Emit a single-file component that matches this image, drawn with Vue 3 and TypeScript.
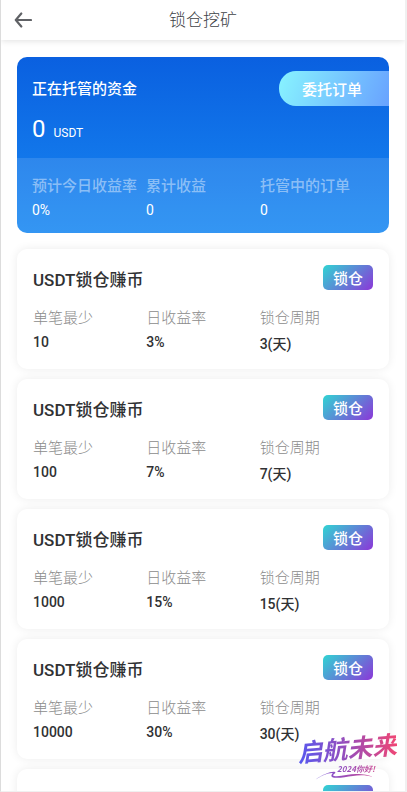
<script setup lang="ts">
interface Stat {
  label: string
  value: string
}

interface Plan {
  id: number
  title: string
  minimum: string
  rate: string
  period: string
}

const stats: Stat[] = [
  { label: '预计今日收益率', value: '0%' },
  { label: '累计收益', value: '0' },
  { label: '托管中的订单', value: '0' },
]

const plans: Plan[] = [
  { id: 1, title: 'USDT锁仓赚币', minimum: '10', rate: '3%', period: '3(天)' },
  { id: 2, title: 'USDT锁仓赚币', minimum: '100', rate: '7%', period: '7(天)' },
  { id: 3, title: 'USDT锁仓赚币', minimum: '1000', rate: '15%', period: '15(天)' },
  { id: 4, title: 'USDT锁仓赚币', minimum: '10000', rate: '30%', period: '30(天)' },
  { id: 5, title: 'USDT锁仓赚币', minimum: '50000', rate: '45%', period: '45(天)' },
]
</script>

<template>
  <div class="page">
    <header class="bar">
      <button class="back" type="button" aria-label="返回">
        <svg width="18" height="16" viewBox="0 0 18 16" aria-hidden="true">
          <path d="M17 8H2M7.3 1.5L1.8 8l5.5 6.5" fill="none" stroke="#606266" stroke-width="2.2" stroke-linecap="round" stroke-linejoin="round" />
        </svg>
      </button>
      <h1>锁仓挖矿</h1>
    </header>

    <main class="content">
      <section class="balance">
        <div class="balance-top">
          <div>
            <h2>正在托管的资金</h2>
            <p class="amount">0<span>USDT</span></p>
          </div>
          <button class="orders" type="button">委托订单</button>
        </div>
        <dl class="grid stats">
          <div v-for="stat in stats" :key="stat.label">
            <dt>{{ stat.label }}</dt>
            <dd>{{ stat.value }}</dd>
          </div>
        </dl>
      </section>

      <article v-for="plan in plans" :key="plan.id" class="plan">
        <div class="plan-head">
          <h3>{{ plan.title }}</h3>
          <button class="lock" type="button">锁仓</button>
        </div>
        <dl class="grid terms">
          <div>
            <dt>单笔最少</dt>
            <dd>{{ plan.minimum }}</dd>
          </div>
          <div>
            <dt>日收益率</dt>
            <dd>{{ plan.rate }}</dd>
          </div>
          <div>
            <dt>锁仓周期</dt>
            <dd class="period">{{ plan.period }}</dd>
          </div>
        </dl>
      </article>
    </main>

    <div class="mark">
      <svg class="flourish" viewBox="0 0 100 54" aria-hidden="true">
        <defs>
          <linearGradient id="ink" gradientUnits="userSpaceOnUse" x1="0" y1="0" x2="100" y2="0">
            <stop offset="0" stop-color="#5a55ee" />
            <stop offset="0.5" stop-color="#a04cb4" />
            <stop offset="1" stop-color="#ef4678" />
          </linearGradient>
        </defs>
        <path
          d="M18 51C26 45 35 42 38 43c2 1-4 3-1 4 6 1 15-2 22-2 8 0 13 1 17 3-6-2-14-2-20-1-8 1-17 3-21 1-2-2 2-4 0-4-5 0-11 3-17 7Z"
          fill="url(#ink)"
        />
      </svg>
      <span class="mark-name">启航未来</span>
      <span class="mark-note">2024你好!</span>
    </div>
  </div>
</template>

<style>
body {
  margin: 0;
  background: #fff;
}
</style>

<style scoped>
.page {
  position: relative;
  box-sizing: border-box;
  height: 100vh;
  overflow: hidden;
  display: flex;
  flex-direction: column;
  border: solid #f0f0f0;
  border-width: 0 2px 1px 1px;
  border-left-color: #dcdcdc;
  background: #fff;
  color: #303133;
  font-family: Roboto, 'Noto Sans CJK SC', sans-serif;
}

h1,
h2,
h3,
p,
dl,
dd {
  margin: 0;
}

button {
  padding: 0;
  border: 0;
  background: none;
  color: #fff;
  font: inherit;
  cursor: pointer;
}

.bar {
  flex: none;
  display: grid;
  grid-template-columns: 44px 1fr 44px;
  align-items: center;
  height: 40px;
  box-shadow: 0 1px 6px rgba(0, 0, 0, 0.12);
}

.back {
  display: flex;
  align-items: center;
  height: 36px;
  padding-left: 13px;
}

h1 {
  color: #404246;
  font-size: 17px;
  font-weight: 300;
  line-height: 24px;
  text-align: center;
}

.content {
  display: flex;
  flex-direction: column;
  gap: 10px;
  padding: 17px 16px 0;
}

.balance {
  flex: none;
  overflow: hidden;
  margin-bottom: 6px;
  border-radius: 10px;
  background: linear-gradient(#0a60e0, #1888f2);
  color: #fff;
}

.balance-top {
  display: flex;
  justify-content: space-between;
  align-items: flex-start;
  height: 101px;
  box-sizing: border-box;
  padding: 14px 0 0 15px;
}

h2 {
  padding-top: 6px;
  font-size: 15px;
  font-weight: 500;
  line-height: 24px;
}

.amount {
  padding-top: 12px;
  font-size: 24px;
  line-height: 32px;
}

.amount span {
  margin-left: 8px;
  font-size: 12px;
}

.orders {
  width: 110px;
  height: 35px;
  padding-right: 4px;
  border-radius: 17px 0 0 17px;
  background: linear-gradient(110deg, #88f4ff, #68a2ff);
  font-size: 15px;
  font-weight: 500;
}

.grid {
  display: grid;
  grid-template-columns: repeat(3, 1fr);
  font-size: 15px;
  line-height: 24px;
}

dt {
  white-space: nowrap;
}

.stats {
  padding: 16px 15px 11px;
  background: rgba(255, 255, 255, 0.12);
}

.stats dt {
  color: rgba(255, 255, 255, 0.45);
  font-weight: 500;
}

.stats dd {
  font-size: 14px;
}

.plan {
  flex: none;
  box-sizing: border-box;
  height: 120px;
  padding: 16px;
  border-radius: 10px;
  background: #fff;
  box-shadow: 0 0 10px rgba(0, 0, 0, 0.08);
}

.plan-head {
  display: flex;
  justify-content: space-between;
  align-items: flex-start;
}

h3 {
  padding-top: 3px;
  font-size: 17px;
  font-weight: 500;
  line-height: 24px;
}

.lock {
  width: 50px;
  height: 25px;
  padding-top: 3px;
  border-radius: 5px;
  background: linear-gradient(135deg, #30d5d3, #8c36d8);
  font-size: 15px;
  font-weight: 500;
  line-height: 22px;
}

.terms {
  padding-top: 14px;
}

.terms dt {
  color: #8c8c8c;
  font-weight: 300;
}

.terms dd {
  font-size: 14px;
  font-weight: 500;
}

.terms .period {
  padding-top: 2px;
}

.mark {
  position: absolute;
  right: 8px;
  bottom: 8px;
  width: 100px;
  height: 54px;
  font-family: 'Noto Sans CJK SC', sans-serif;
  font-style: italic;
  pointer-events: none;
}

.flourish {
  position: absolute;
  inset: 0;
}

.mark-name {
  display: block;
  background: linear-gradient(90deg, #5558f0, #a04cb4 55%, #f04674);
  background-clip: text;
  color: transparent;
  font-size: 25px;
  font-weight: 700;
  line-height: 36px;
  white-space: nowrap;
  transform: rotate(-5deg);
}

.mark-note {
  display: block;
  padding-left: 40px;
  background: linear-gradient(90deg, #5558f0, #a04cb4 55%, #f04674);
  background-clip: text;
  color: transparent;
  font-size: 8px;
  font-weight: 700;
  line-height: 8px;
  white-space: nowrap;
}
</style>
